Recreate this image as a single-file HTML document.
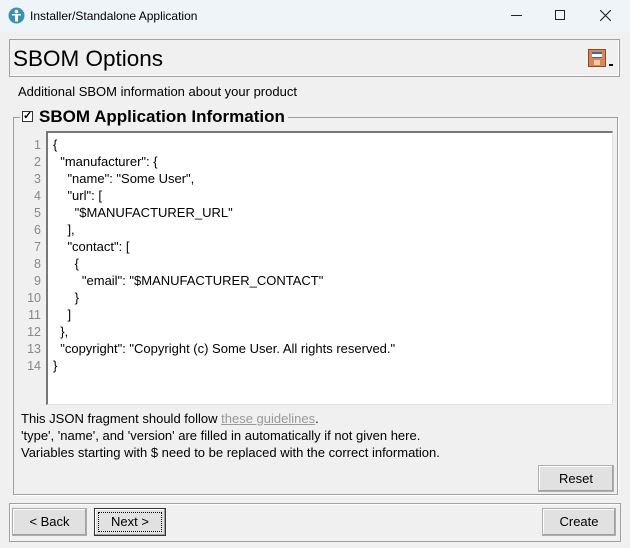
<!DOCTYPE html>
<html><head><style>
*{box-sizing:border-box;margin:0;padding:0}
body{width:630px;height:548px;background:#f0f0f0;font-family:"Liberation Sans",sans-serif;font-size:13px;color:#000;position:relative;overflow:hidden}
.abs{position:absolute}
.title{left:0;top:0;width:630px;height:32px;background:#eff4f9}
.btn{position:absolute;background:#e1e1e1;border:1px solid #adadad;box-shadow:inset -1px -1px 0 #a0a0a0,inset 1px 1px 0 #fff;text-align:center;font-size:13px;line-height:26px}
.ln{position:absolute;left:18px;width:23px;text-align:right;color:#888;font-size:12.5px}
.cd{position:absolute;left:53px;white-space:pre;font-size:13px}
</style></head><body>
<div class="abs title"></div>
<svg class="abs" style="left:8px;top:7px" width="17" height="17" viewBox="0 0 17 17"><circle cx="8.5" cy="8.5" r="8" fill="#3a8fb5"/><circle cx="8.5" cy="4.5" r="1.8" fill="#fff"/><path d="M4 7h9v1.5h-3v6h-3v-6H4z" fill="#fff"/></svg>
<div class="abs" style="left:30px;top:9px;font-size:12px">Installer/Standalone Application</div>
<div class="abs" style="left:511px;top:15px;width:11px;height:1px;background:#222"></div>
<div class="abs" style="left:555px;top:10px;width:10px;height:10px;border:1px solid #222"></div>
<svg class="abs" style="left:600px;top:10px" width="11" height="11"><path d="M0 0L11 11M11 0L0 11" stroke="#222" stroke-width="1.1"/></svg>
<div class="abs" style="left:9px;top:39px;width:611px;height:38px;border:1px solid #a0a0a0;box-shadow:inset -1px -1px 0 #fff"></div>
<div class="abs" style="left:13px;top:46px;font-size:22.5px">SBOM Options</div>
<div class="abs" style="left:588px;top:49px;width:18px;height:18px;background:#d8865a;border:1px solid #8a4a2a"><div style="margin:2px 3px;height:6px;background:#fff;border-top:2px solid #2a6fb0;border-bottom:1px solid #2a6fb0"></div><div style="margin:1px 5px;height:5px;background:#f5c9a8"></div></div>
<div class="abs" style="left:609px;top:64px;width:4px;height:2px;background:#000"></div>
<div class="abs" style="left:18px;top:84px;font-size:13px">Additional SBOM information about your product</div>
<div class="abs" style="left:13px;top:117px;width:605px;height:378px;border:1px solid #a0a0a0;box-shadow:1px 1px 0 #fff"></div>
<div class="abs" style="left:20px;top:108px;width:268px;height:18px;background:#f0f0f0"></div>
<div class="abs" style="left:22px;top:111px;width:11px;height:11px;border:1px solid #333;background:#fff;font-size:11px;line-height:9px;text-align:center;font-weight:bold">✓</div>
<div class="abs" style="left:39px;top:107px;font-size:17px;font-weight:bold">SBOM Application Information</div>
<div class="abs" style="left:46px;top:131px;width:567px;height:274px;background:#fff;border-left:2px solid #777;border-top:2px solid #777;border-right:1px solid #e0e0e0;border-bottom:1px solid #e0e0e0"></div>
<div class="ln" style="top:138px">1</div><div class="cd" style="top:137px">{</div>
<div class="ln" style="top:155px">2</div><div class="cd" style="top:154px">  "manufacturer": {</div>
<div class="ln" style="top:172px">3</div><div class="cd" style="top:171px">    "name": "Some User",</div>
<div class="ln" style="top:189px">4</div><div class="cd" style="top:188px">    "url": [</div>
<div class="ln" style="top:206px">5</div><div class="cd" style="top:205px">      "$MANUFACTURER_URL"</div>
<div class="ln" style="top:223px">6</div><div class="cd" style="top:222px">    ],</div>
<div class="ln" style="top:240px">7</div><div class="cd" style="top:239px">    "contact": [</div>
<div class="ln" style="top:257px">8</div><div class="cd" style="top:256px">      {</div>
<div class="ln" style="top:274px">9</div><div class="cd" style="top:273px">        "email": "$MANUFACTURER_CONTACT"</div>
<div class="ln" style="top:291px">10</div><div class="cd" style="top:290px">      }</div>
<div class="ln" style="top:308px">11</div><div class="cd" style="top:307px">    ]</div>
<div class="ln" style="top:325px">12</div><div class="cd" style="top:324px">  },</div>
<div class="ln" style="top:342px">13</div><div class="cd" style="top:341px">  "copyright": "Copyright (c) Some User. All rights reserved."</div>
<div class="ln" style="top:359px">14</div><div class="cd" style="top:358px">}</div>
<div class="abs" style="left:21px;top:411px">This JSON fragment should follow <span style="color:#999;text-decoration:underline">these guidelines</span>.</div>
<div class="abs" style="left:21px;top:428px">'type', 'name', and 'version' are filled in automatically if not given here.</div>
<div class="abs" style="left:21px;top:445px">Variables starting with $ need to be replaced with the correct information.</div>
<div class="btn" style="left:538px;top:465px;width:76px;height:27px">Reset</div>
<div class="abs" style="left:9px;top:503px;width:612px;height:39px;border:1px solid #a0a0a0;box-shadow:inset 1px 1px 0 #fff"></div>
<div class="btn" style="left:12px;top:508px;width:75px;height:28px">&lt; Back</div>
<div class="btn" style="left:94px;top:508px;width:72px;height:28px;border-color:#333"><div style="position:absolute;left:3px;top:3px;right:3px;bottom:3px;border:1px dotted #000"></div><span style="line-height:26px">Next &gt;</span></div>
<div class="btn" style="left:542px;top:508px;width:74px;height:28px">Create</div>
</body></html>
